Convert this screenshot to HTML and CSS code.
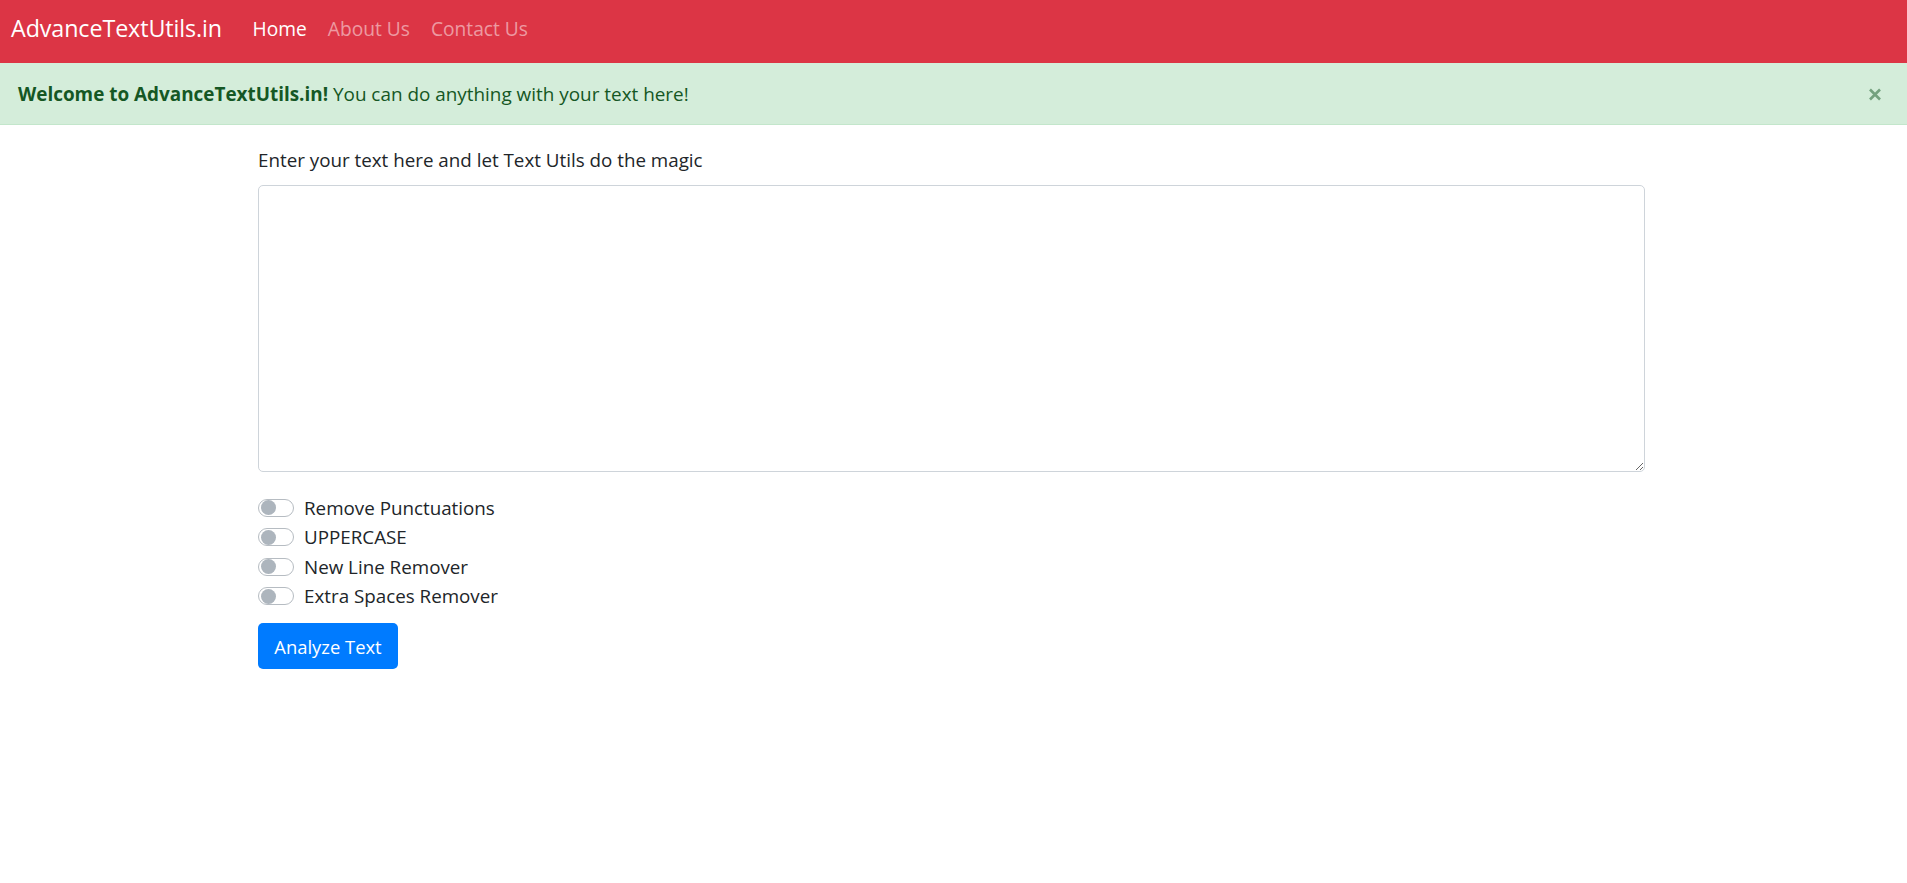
FILE: index.html
```html
<!DOCTYPE html>
<html lang="en">
<head>
<meta charset="utf-8">
<title>AdvanceTextUtils.in</title>
<link rel="stylesheet" href="styles.css">
</head>
<body>
<nav class="navbar">
  <a class="brand" href="#">AdvanceTextUtils.in</a>
  <ul class="nav-links">
    <li><a class="nav-link active" href="#">Home</a></li>
    <li><a class="nav-link" href="#">About Us</a></li>
    <li><a class="nav-link" href="#">Contact Us</a></li>
  </ul>
</nav>
<div class="alert">
  <span><strong>Welcome to AdvanceTextUtils.in!</strong> You can do anything with your text here!</span>
  <button class="close" aria-label="Close">
    <svg width="14" height="13" viewBox="0 0 14 13"><path d="M2 1.5 L12 11.5 M12 1.5 L2 11.5" stroke="currentColor" stroke-width="2.6" fill="none"/></svg>
  </button>
</div>
<main class="container">
  <label class="form-label" for="myBox">Enter your text here and let Text Utils do the magic</label>
  <textarea class="form-control" id="myBox"></textarea>
  <div class="switches">
    <div class="switch-row"><span class="switch"><span class="knob"></span></span><span class="switch-label">Remove Punctuations</span></div>
    <div class="switch-row"><span class="switch"><span class="knob"></span></span><span class="switch-label">UPPERCASE</span></div>
    <div class="switch-row"><span class="switch"><span class="knob"></span></span><span class="switch-label">New Line Remover</span></div>
    <div class="switch-row"><span class="switch"><span class="knob"></span></span><span class="switch-label">Extra Spaces Remover</span></div>
  </div>
  <button class="btn-primary">Analyze Text</button>
</main>
</body>
</html>
```
FILE: styles.css
```css
* { box-sizing: border-box; }
html, body { margin: 0; padding: 0; }
body {
  font-family: "Open Sans", "Noto Sans", sans-serif;
  font-size: 18.8px;
  color: #212529;
  background: #fff;
}
.navbar {
  height: 63px;
  background: #dc3545;
  display: flex;
  align-items: center;
  padding: 0 0 7px 11px;
}
.brand {
  color: #fff;
  text-decoration: none;
  font-size: 23.3px;
  letter-spacing: -0.1px;
}
.nav-links {
  list-style: none;
  display: flex;
  margin: 0 0 0 20px;
  padding: 0;
}
.nav-link {
  display: block;
  padding: 0 10.5px;
  color: rgba(255,255,255,0.5);
  text-decoration: none;
  font-size: 19.2px;
}
.nav-link.active { color: #fff; }
.alert {
  height: 62px;
  background: #d4edda;
  border-bottom: 1px solid #c3e6cb;
  color: #155724;
  display: flex;
  align-items: center;
  justify-content: space-between;
  padding: 0 25px 0 18px;
  font-size: 18.9px;
}
.alert strong { font-weight: 700; }
.close {
  background: none;
  border: 0;
  padding: 0;
  color: #155724;
  opacity: 0.5;
  display: flex;
  margin-top: 2px;
}
.container {
  width: 1387px;
  margin-left: 258px;
  padding-top: 22px;
}
.form-label {
  display: block;
  line-height: 26px;
  margin-bottom: 12px;
}
.form-control {
  display: block;
  width: 100%;
  height: 287px;
  border: 1px solid #ced4da;
  border-radius: 5px;
  font-family: inherit;
  font-size: inherit;
  margin: 0;
}
.switches {
  margin-top: 21px;
}
.switch-row {
  display: flex;
  align-items: center;
  height: 29.5px;
}
.switch {
  width: 36px;
  height: 18px;
  border: 1px solid #b6bcc2;
  border-radius: 9px;
  display: flex;
  align-items: center;
  padding-left: 2px;
  margin-right: 10px;
  background: #fff;
}
.knob {
  width: 15px;
  height: 15px;
  border-radius: 50%;
  background: #adb5bd;
}
.btn-primary {
  margin-top: 12px;
  width: 140px;
  height: 46px;
  background: #007bff;
  color: #fff;
  border: 0;
  border-radius: 5px;
  font-family: inherit;
  font-size: 18.4px;
  padding: 0;
}
```
